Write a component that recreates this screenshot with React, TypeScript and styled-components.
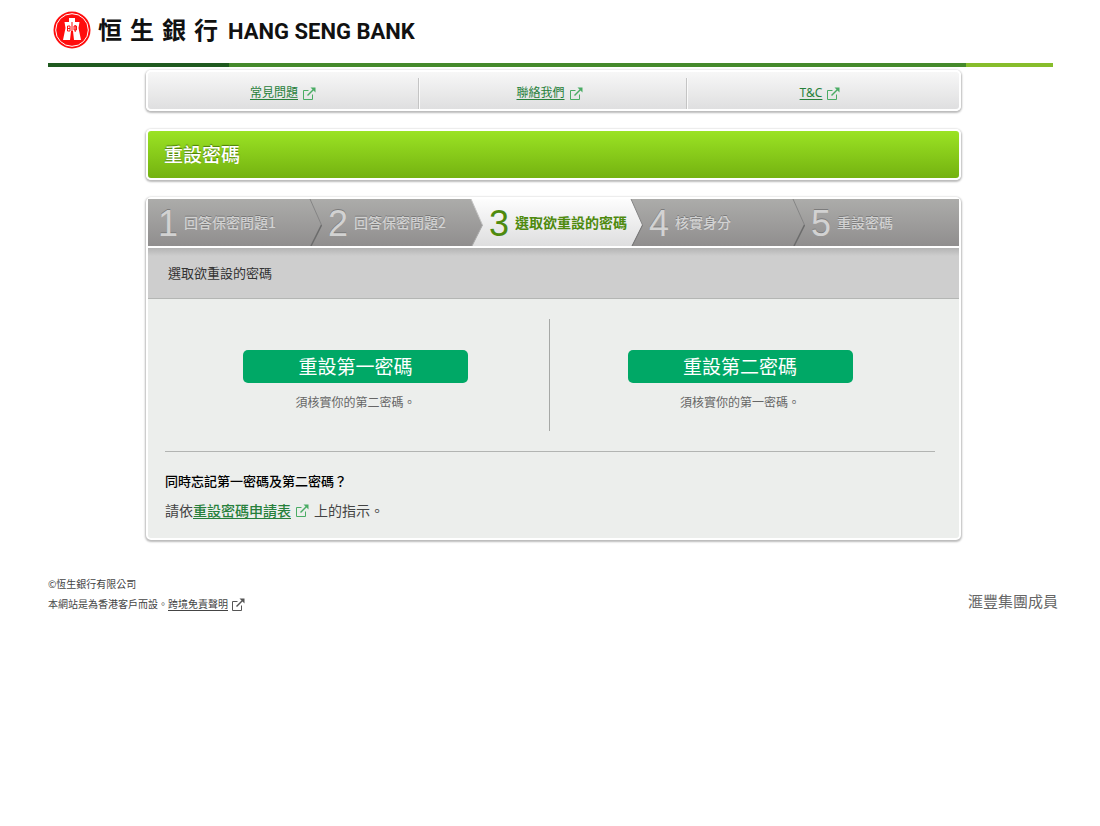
import React from 'react';
import styled, { createGlobalStyle, css } from 'styled-components';

const GlobalStyle = createGlobalStyle`
  * { box-sizing: border-box; }
  body {
    margin: 0;
    background: #fff;
    color: #333;
    font-family: "Noto Sans CJK TC", sans-serif;
    font-size: 14px;
    line-height: 20px;
  }
  h1, h2, h3, p, ol, ul { margin: 0; padding: 0; font-weight: 400; }
  ol, ul { list-style: none; }
`;

const Page = styled.div`
  padding: 0 41px 0 48px;
`;

const Header = styled.header`
  margin-right: 6px;
`;

const Brand = styled.a`
  display: flex;
  align-items: center;
  height: 63px;
  padding: 0 0 3px 5px;
  color: #111;
  text-decoration: none;
`;

const ChineseName = styled.span`
  display: flex;
  gap: 8px;
  margin-left: 7px;
  padding-bottom: 2px;
  font-size: 24px;
  line-height: 32px;
  font-weight: 700;
`;

const EnglishName = styled.span`
  margin-left: 10px;
  padding-top: 3px;
  font-family: Roboto, sans-serif;
  font-size: 22px;
  line-height: 32px;
  font-weight: 700;
`;

const BrandBar = styled.div`
  height: 4px;
  background: linear-gradient(90deg, #1f5a1f 0 18%, #458a2b 18% 91.3%, #87bd2b 91.3%);
`;

const Content = styled.main`
  width: 100%;
  max-width: 815px;
  margin: 3px auto 0;
  display: flex;
  flex-direction: column;
`;

const panel = css`
  border: 2px solid #fff;
  border-radius: 5px;
  box-shadow: 0 1px 2px 1px #bbb;
`;

const QuickLinks = styled.nav`
  ${panel}
  display: grid;
  grid-template-columns: 270fr 268fr 273fr;
  height: 41px;
  padding-top: 6px;
  background: linear-gradient(#f7f7f7, #dfdfe0);
`;

const QuickItem = styled.div`
  display: flex;
  align-items: center;
  justify-content: center;
  gap: 5px;
  padding: 0 6px 2px 0;
  font-family: "Noto Sans", "Noto Sans CJK TC", sans-serif;
  font-size: 12px;
  &:first-child { padding-right: 0; }
  & + & { border-left: 1px solid #c4c4c4; box-shadow: inset 1px 0 #fafafa; }
`;

const GreenLink = styled.a<{ $bold?: boolean }>`
  color: #27803b;
  font-weight: ${p => (p.$bold ? 500 : 400)};
  text-decoration: underline;
  text-underline-offset: 2px;
`;

const TitleBar = styled.div`
  ${panel}
  margin-top: 18px;
  height: 51px;
  padding: 0 16px 1px;
  display: flex;
  align-items: center;
  background: linear-gradient(#9be324, #74b210);
`;

const Title = styled.h1`
  color: #fff;
  font-size: 19px;
  line-height: 24px;
  font-weight: 500;
  text-shadow: 0 -1px 1px #4c7a0c;
`;

const Panel = styled.section`
  ${panel}
  margin-top: 17px;
  background: #eceeec;
`;

const Steps = styled.ol`
  display: grid;
  grid-template-columns: 174fr 161fr 160fr 162fr 154fr;
  height: 49px;
  border-bottom: 2px solid #fff;
`;

const Step = styled.li<{ $current?: boolean }>`
  display: flex;
  align-items: center;
  gap: 6px;
  padding-left: 6px;
  white-space: nowrap;
  background: ${p => (p.$current ? 'linear-gradient(#fdfdfd, #dededf)' : 'linear-gradient(#acacaa, #908e8e)')};
  color: ${p => (p.$current ? '#4e8a0e' : '#d2d2d2')};
  text-shadow: ${p => (p.$current ? 'none' : '0 -1px 0 #7c7c7c')};
  &:first-child { padding-left: 10px; }
`;

const StepNumber = styled.span`
  padding-top: 2px;
  font-family: "Liberation Sans", Arial, sans-serif;
  font-size: 36px;
  line-height: 44px;
`;

const StepLabel = styled.span<{ $current?: boolean }>`
  flex: 1;
  min-width: 0;
  padding-bottom: 1px;
  font-weight: ${p => (p.$current ? 700 : 500)};
`;

const Arrow = styled.svg`
  flex: none;
  display: block;
  margin-left: -6px;
`;

const SubHeading = styled.h2`
  height: 51px;
  padding: 15px 20px;
  border-bottom: 1px solid #b4b6b4;
  background: linear-gradient(#b4b4b4, #cecece 8px);
  color: #333;
  font-size: 13px;
`;

const Body = styled.div`
  padding: 20px 24px 18px 17px;
`;

const Choices = styled.div`
  display: grid;
  grid-template-columns: 1fr 1fr;
  height: 112px;
  margin-right: 2px;
`;

const Choice = styled.div`
  display: flex;
  flex-direction: column;
  align-items: center;
  gap: 9px;
  padding: 31px 3px 0 0;
  & + & { border-left: 1px solid #a6a8a6; }
`;

const ResetButton = styled.button`
  width: 225px;
  max-width: 90%;
  height: 33px;
  padding: 0 0 2px;
  border: 0;
  border-radius: 5px;
  background: #00a866;
  color: #fff;
  font-family: inherit;
  font-size: 19px;
  line-height: 30px;
  font-weight: 400;
`;

const Note = styled.p`
  color: #666;
  font-size: 12px;
`;

const Forgot = styled.div`
  margin-top: 20px;
  padding-top: 19px;
  border-top: 1px solid #b2b4b2;
`;

const ForgotTitle = styled.h3`
  color: #000;
  font-size: 13px;
  font-weight: 500;
`;

const Instruction = styled.p`
  display: flex;
  align-items: center;
  margin-top: 9px;
  color: #444;
  svg { margin: 0 5px; }
`;

const Footer = styled.footer`
  display: flex;
  justify-content: space-between;
  align-items: flex-start;
  margin-top: 34px;
  padding-right: 1px;
  color: #444;
  font-size: 10px;
`;

const Legal = styled.p`
  display: flex;
  align-items: center;
  svg { margin-left: 4px; }
`;

const FooterLink = styled.a`
  color: #444;
  text-decoration: underline;
  text-underline-offset: 2px;
`;

const Member = styled.p`
  padding-top: 17px;
  color: #666;
  font-size: 15px;
`;

const External = ({ color = '#4aac64' }: { color?: string }) => (
  <svg width="13" height="14" viewBox="0 0 13 14" fill="none" stroke={color} aria-hidden="true">
    <path d="M5.500 4.500H.5v9h9V8.500" />
    <path d="M4.500 9.500 11 3" strokeWidth="1.400" />
    <path d="M7.500 1.500h5v5z" fill={color} stroke="none" />
  </svg>
);

const Emblem = () => (
  <svg width="38" height="38" viewBox="0 0 38 38" aria-hidden="true">
    <circle cx="19" cy="19" r="18.500" fill="#ff0d0d" />
    <circle cx="19" cy="19" r="16.300" fill="none" stroke="#fff" strokeWidth="1" />
    <path fill="#fff" d="M16 7h6v4h4.500l-1 6 2.500 12h-7l-1-9h-2l-1 9h-7l2.500-12-1-6H16z" />
    <path fill="none" stroke="#ff0d0d" strokeWidth="1" d="M19 11v10M14.500 15h2.500v5h-2.500zM14.500 17.500h2.500M21 15h2.500v4H21zM22.200 14v7" />
  </svg>
);

const StepArrow = ({ id, kind }: { id: string; kind: 'line' | 'light' | 'dark' }) => (
  <Arrow width="14" height="47" viewBox="0 0 14 47" aria-hidden="true">
    <defs>
      <linearGradient id={id} x1="0" y1="0" x2="0" y2="47" gradientUnits="userSpaceOnUse">
        <stop offset="0" stopColor={kind === 'light' ? '#fdfdfd' : '#acacaa'} />
        <stop offset="1" stopColor={kind === 'light' ? '#dededf' : '#908e8e'} />
      </linearGradient>
    </defs>
    <path d="M2 0 13.500 26 3 47H14V0z" fill={`url(#${id})`} />
    <path d="M2 0 13.500 26" stroke={kind === 'light' ? '#c4c4c4' : '#858585'} fill="none" />
    <path d="M13.500 26 3 47" stroke={kind === 'light' ? '#a8a8a8' : '#6c6c6c'} strokeWidth={kind === 'line' ? 1.500 : 1} fill="none" />
  </Arrow>
);

const steps: { label: string; arrow?: 'line' | 'light' | 'dark'; current?: boolean }[] = [
  { label: '回答保密問題1', arrow: 'line' },
  { label: '回答保密問題2', arrow: 'light' },
  { label: '選取欲重設的密碼', arrow: 'dark', current: true },
  { label: '核實身分', arrow: 'line' },
  { label: '重設密碼' },
];

export default function App() {
  return (
    <Page lang="zh-Hant">
      <GlobalStyle />
      <Header>
        <Brand href="#">
          <Emblem />
          <ChineseName>
            {['恒', '生', '銀', '行'].map(c => <span key={c}>{c}</span>)}
          </ChineseName>
          <EnglishName>HANG SENG BANK</EnglishName>
        </Brand>
        <BrandBar />
      </Header>

      <Content>
        <QuickLinks>
          {['常見問題', '聯絡我們', 'T&C'].map(name => (
            <QuickItem key={name}>
              <GreenLink href="#">{name}</GreenLink>
              <External />
            </QuickItem>
          ))}
        </QuickLinks>

        <TitleBar>
          <Title>重設密碼</Title>
        </TitleBar>

        <Panel>
          <Steps>
            {steps.map((s, i) => (
              <Step key={s.label} $current={s.current} aria-current={s.current ? 'step' : undefined}>
                <StepNumber>{i + 1}</StepNumber>
                <StepLabel $current={s.current}>{s.label}</StepLabel>
                {s.arrow && <StepArrow id={`step-arrow-${i}`} kind={s.arrow} />}
              </Step>
            ))}
          </Steps>
          <SubHeading>選取欲重設的密碼</SubHeading>
          <Body>
            <Choices>
              <Choice>
                <ResetButton type="button">重設第一密碼</ResetButton>
                <Note>須核實你的第二密碼。</Note>
              </Choice>
              <Choice>
                <ResetButton type="button">重設第二密碼</ResetButton>
                <Note>須核實你的第一密碼。</Note>
              </Choice>
            </Choices>
            <Forgot>
              <ForgotTitle>同時忘記第一密碼及第二密碼？</ForgotTitle>
              <Instruction>
                請依<GreenLink href="#" $bold>重設密碼申請表</GreenLink>
                <External />
                上的指示。
              </Instruction>
            </Forgot>
          </Body>
        </Panel>
      </Content>

      <Footer>
        <div>
          <Legal>©恆生銀行有限公司</Legal>
          <Legal>
            本網站是為香港客戶而設。<FooterLink href="#">跨境免責聲明</FooterLink>
            <External color="#555" />
          </Legal>
        </div>
        <Member>滙豐集團成員</Member>
      </Footer>
    </Page>
  );
}
